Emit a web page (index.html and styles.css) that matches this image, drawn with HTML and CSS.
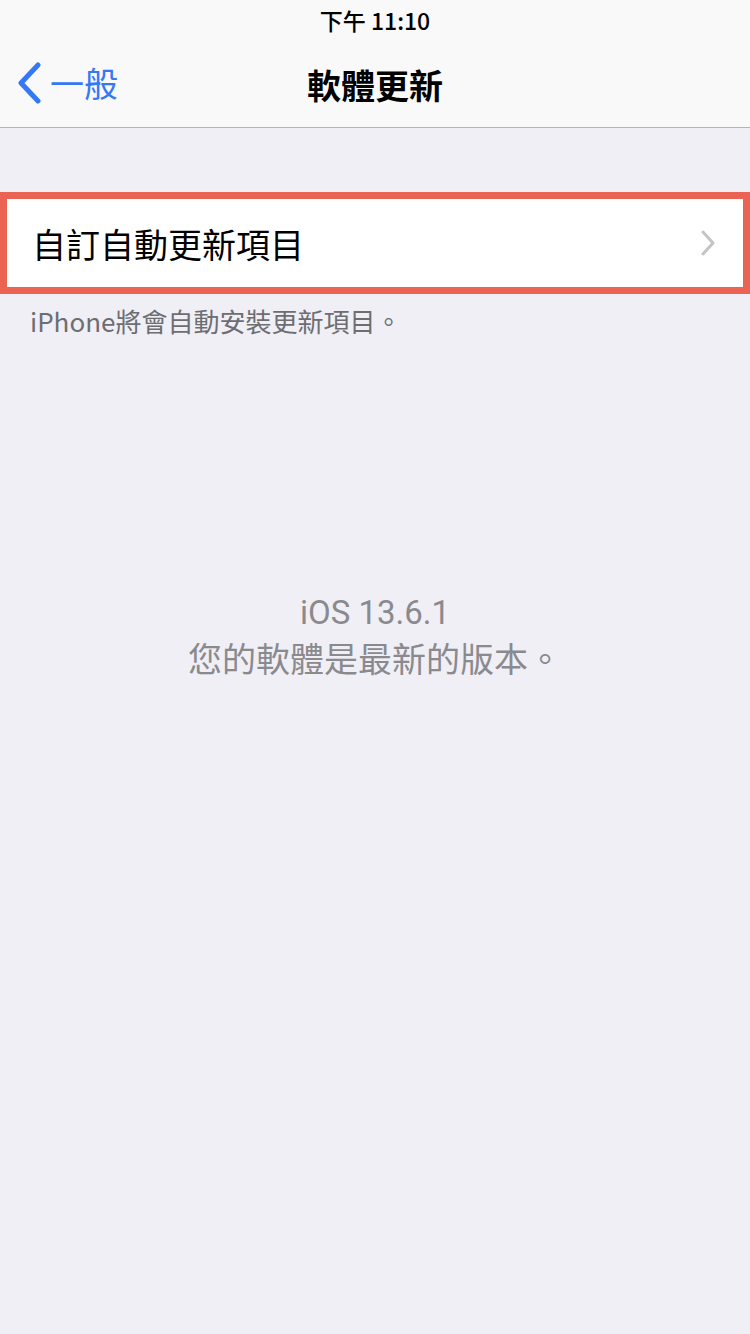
FILE: index.html
```html
<!DOCTYPE html>
<html lang="zh-Hant">
<head>
<meta charset="utf-8">
<link rel="stylesheet" href="styles.css">
</head>
<body>
<div class="screen">
  <header class="navbar">
    <div class="status">下午 11:10</div>
    <div class="nav">
      <div class="back">
        <svg class="chev" width="26" height="42" viewBox="0 0 26 42"><path d="M22 3 L5 21 L22 39" fill="none" stroke="#3478f6" stroke-width="5" stroke-linecap="round" stroke-linejoin="round"/></svg>
        <span class="back-text">一般</span>
      </div>
      <div class="title">軟體更新</div>
    </div>
  </header>
  <section class="group">
    <div class="cell">
      <span class="cell-text">自訂自動更新項目</span>
      <svg class="disc" width="16" height="26" viewBox="0 0 16 26"><path d="M3 2 L13 13 L3 24" fill="none" stroke="#c4c4c7" stroke-width="3" stroke-linecap="round" stroke-linejoin="round"/></svg>
    </div>
    <div class="footer">iPhone將會自動安裝更新項目。</div>
  </section>
  <section class="status-msg">
    <div class="ver">iOS 13.6.1</div>
    <div class="msg">您的軟體是最新的版本。</div>
  </section>
</div>
</body>
</html>
```
FILE: styles.css
```css
html, body {
  margin: 0;
  padding: 0;
}
body {
  background: #f0eff5;
  font-family: "Noto Sans CJK TC", "Noto Sans", sans-serif;
}
.screen {
  width: 750px;
  height: 1334px;
  background: #f0eff5;
  overflow: hidden;
}
.navbar {
  background: #f9f9f9;
  border-bottom: 1px solid #b5b5b8;
  height: 128px;
  box-sizing: border-box;
}
.status {
  height: 40px;
  display: flex;
  align-items: center;
  justify-content: center;
  font-size: 23px;
  font-weight: 500;
  color: #000;
}
.nav {
  position: relative;
  height: 87px;
  display: flex;
  align-items: center;
  justify-content: center;
}
.back {
  position: absolute;
  left: 16px;
  top: 22px;
  display: flex;
  align-items: center;
  gap: 8px;
  color: #3478f6;
}
.back-text {
  font-size: 34px;
  line-height: 42px;
}
.title {
  font-size: 34px;
  font-weight: 700;
  color: #000;
  margin-top: 2px;
}
.group {
  margin-top: 64px;
}
.cell {
  height: 102px;
  box-sizing: border-box;
  background: #fff;
  border: 7px solid #ea6353;
  display: flex;
  align-items: center;
  justify-content: space-between;
  padding: 0 27px 0 25px;
}
.cell-text {
  font-size: 34px;
  color: #000;
}
.footer {
  padding: 9px 30px 0;
  font-size: 26px;
  color: #6d6d72;
  line-height: 36px;
}
.status-msg {
  margin-top: 254px;
  text-align: center;
  color: #8a8a8e;
}
.ver {
  font-family: Roboto, "Noto Sans", sans-serif;
  font-size: 33px;
  line-height: 40px;
}
.msg {
  font-size: 34px;
  line-height: 49px;
}
```
